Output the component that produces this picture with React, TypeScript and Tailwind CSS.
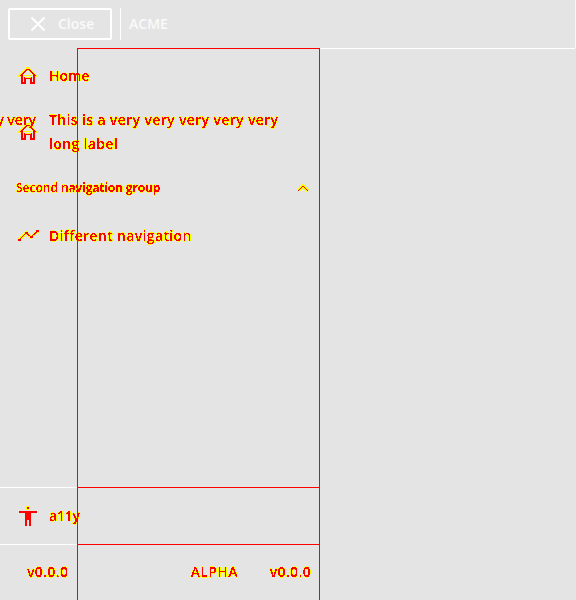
import React from "react";

function DiffFilter() {
  return (
    <svg width="0" height="0" className="absolute" aria-hidden="true">
      <filter id="diff" x="-5%" y="-20%" width="110%" height="140%" colorInterpolationFilters="sRGB">
        <feConvolveMatrix in="SourceAlpha" order="3" kernelMatrix="0 1 0 1 4 1 0 1 0" divisor="4" result="soft" />
        <feComponentTransfer in="soft" result="edge">
          <feFuncR type="linear" slope="0" intercept="1" />
          <feFuncG type="linear" slope="0" intercept="1" />
          <feFuncA type="linear" slope="40" intercept="-8" />
        </feComponentTransfer>
        <feComponentTransfer in="SourceAlpha" result="core">
          <feFuncR type="linear" slope="0" intercept="1" />
          <feFuncA type="linear" slope="40" intercept="-19" />
        </feComponentTransfer>
        <feMerge>
          <feMergeNode in="edge" />
          <feMergeNode in="core" />
        </feMerge>
      </filter>
    </svg>
  );
}

function HomeIcon() {
  return (
    <svg width="20" height="20" viewBox="0 0 20 20" className="shrink-0 overflow-visible" fill="none" shapeRendering="crispEdges">
      <path d="M0 10h3V8h2V6h2V4h2V2h2v2h2v2h2v2h2v2h3" stroke="#ff0" strokeWidth="2" />
      <path d="M6 11h8M6 9.5h8M9 12v4M11 12v4" stroke="#ff0" strokeWidth="1" />
      <path d="M2 9.8 10 3l8 6.8" stroke="red" strokeWidth="1.3" />
      <path d="M4 8v9h3v-5h6v5h3V8" stroke="red" strokeWidth="2" />
      <path d="M7 11h6" stroke="#ff0" />
    </svg>
  );
}

function ChartIcon() {
  return (
    <svg width="22" height="20" viewBox="0 0 22 20" className="-mr-0.5 shrink-0" shapeRendering="crispEdges" fill="none">
      <path d="m1 14 7-7 5 4 7-6" stroke="#ff0" strokeWidth="3" />
      <path d="m1 14 7-7 5 4 7-6" stroke="red" strokeWidth="1" />
      <path d="M0 13h3v2H0zM7 6h3v2H7zM12 10h3v2h-3zM18 4h3v2h-3z" fill="red" />
    </svg>
  );
}

function PersonIcon() {
  return (
    <svg width="20" height="20" viewBox="0 0 20 20" className="shrink-0" shapeRendering="crispEdges">
      <path d="M8 0h4v4H8z" fill="#ff0" />
      <path d="M9 1h2v2H9zM1 5h18v2h-6v13h-2v-6H9v6H7V7H1z" fill="red" />
    </svg>
  );
}

const mark = "[filter:url(#diff)]";

export default function App() {
  return (
    <div className="relative flex h-[600px] w-[576px] flex-col overflow-hidden bg-[#e4e4e4] font-['Open_Sans',sans-serif] text-sm font-semibold leading-6 text-[#f00]">
      <DiffFilter />
      <header className="flex h-12 shrink-0 items-center border-r border-[#f7f7f7] pl-2 text-[#fafafa]">
        <button className="flex h-8 w-26 items-center rounded-[2px] border-2 border-white pl-5">
          <svg width="16" height="16" viewBox="0 0 16 16" stroke="white" strokeWidth="2">
            <path d="m1.5 1.5 13 13m0-13-13 13" />
          </svg>
          <span className="ml-3">Close</span>
        </button>
        <div className="ml-2 h-8 w-px bg-white" />
        <span className="ml-2">ACME</span>
      </header>
      <div className="flex min-h-0 flex-1">
        <aside className="flex w-80 shrink-0 flex-col border-r border-[#f00]">
          <div className="ml-[77px] h-px shrink-0 bg-[#f00]" />
          <nav className="flex min-h-0 flex-1 flex-col">
            <div className="mt-[15px] flex h-6 items-center pl-[18px]">
              <HomeIcon />
              <span className={`ml-[11px] ${mark}`}>Home</span>
            </div>
            <div className="relative mt-5 flex h-12 items-center pl-[18px]">
              <HomeIcon />
              <span className={`absolute top-0 right-[283px] whitespace-nowrap tracking-[-0.1px] ${mark}`}>y very</span>
              <span className={`ml-[11px] w-[240px] tracking-[0.36px] ${mark}`}>This is a very very very very very long label</span>
            </div>
            <div className="relative mt-5 flex h-6 items-center justify-between pl-4 pr-[10px] text-xs">
              <span className={`font-bold tracking-[-0.17px] ${mark}`}>Second navigation group</span>
              <svg width="12" height="8" viewBox="0 0 12 8" fill="none" shapeRendering="crispEdges">
                <path d="m1 7 5-5 5 5" stroke="#ff0" strokeWidth="3" />
                <path d="m1 7 5-5 5 5" stroke="red" strokeWidth="1.4" />
              </svg>
              <span className={`absolute left-4 w-[61px] overflow-hidden whitespace-nowrap ${mark}`}>Second n…</span>
            </div>
            <div className="mt-6 flex h-6 items-center pl-[18px]">
              <ChartIcon />
              <span className={`ml-[11px] tracking-[0.35px] ${mark}`}>Different navigation</span>
            </div>
          </nav>
          <div className="flex h-px shrink-0">
            <div className="w-[77px] bg-white" />
            <div className="flex-1 bg-[#f00]" />
          </div>
          <div className="flex h-14 shrink-0 items-center pl-[18px]">
            <PersonIcon />
            <span className={`ml-[11px] tracking-[-0.2px] ${mark}`}>a11y</span>
          </div>
          <div className="flex h-px shrink-0">
            <div className="w-[77px] bg-white" />
            <div className="flex-1 bg-[#f00]" />
          </div>
          <footer className="flex h-[55px] shrink-0 items-center pb-0.5 pl-[27px] pr-2 tracking-[0.35px]">
            <span className={mark}>v0.0.0</span>
            <span className={`ml-auto ${mark}`}>ALPHA</span>
            <span className={`ml-8 ${mark}`}>v0.0.0</span>
          </footer>
        </aside>
        <main className="mr-px h-px flex-1 bg-white" />
      </div>
      <div className="absolute top-12 bottom-0 left-[77px] w-px bg-[#f00]" />
    </div>
  );
}
